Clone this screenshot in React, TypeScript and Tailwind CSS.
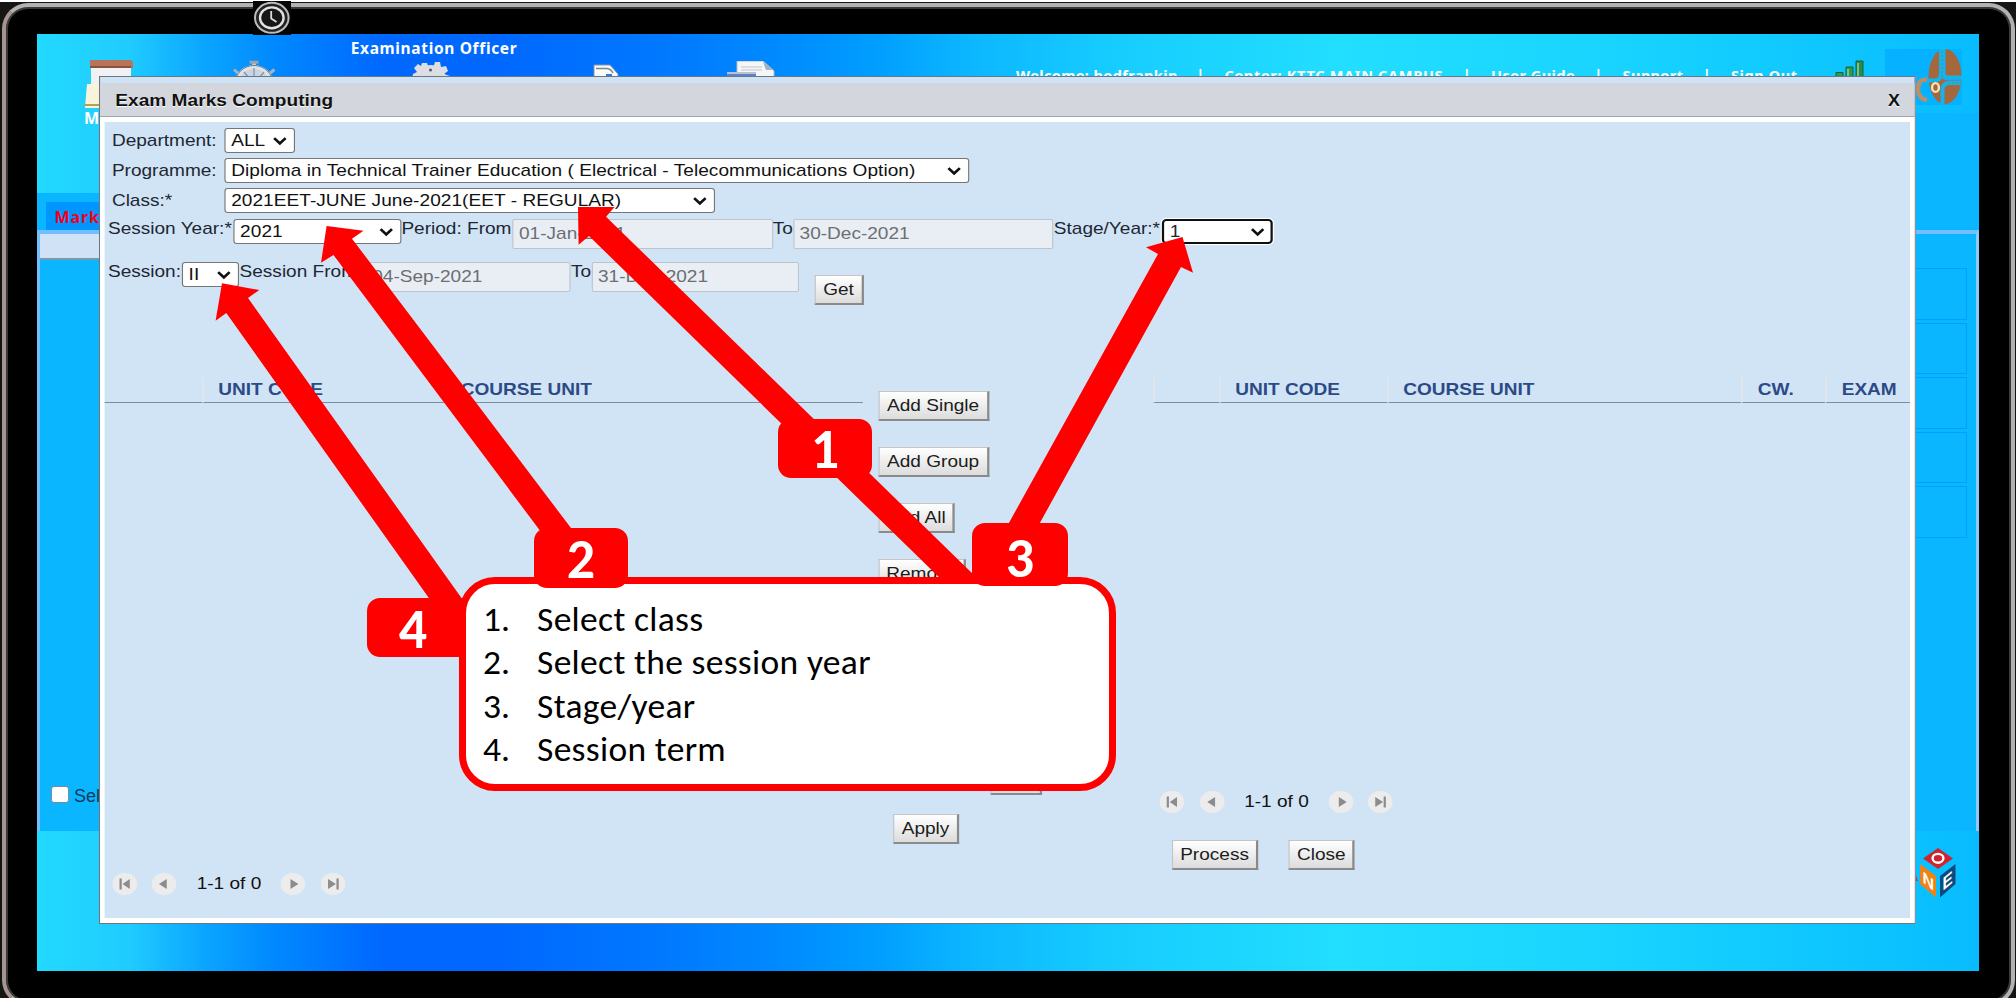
import React from "react";

function Chevron({ className = "" }: { className?: string }) {
  return (
    <svg viewBox="0 0 14 10" className={"h-[10px] w-[13px] shrink-0 " + className} fill="none" stroke="#111" strokeWidth="2.6">
      <path d="M1.5 2 L7 7.6 L12.5 2" />
    </svg>
  );
}

function Select({ value, className }: { value: string; className: string }) {
  return (
    <div className={"flex items-center justify-between rounded-[3px] border border-[#767676] bg-white pl-[5px] pr-[6px] text-[#111] " + className}>
      <span className="whitespace-nowrap leading-5 tracking-[0.05px]">{value}</span>
      <Chevron />
    </div>
  );
}

function DateBox({ value, className }: { value: string; className: string }) {
  return (
    <div className={"flex h-[30px] items-center rounded-[2px] border border-[#bcc4cc] bg-[#e9eef5] pl-[5px] text-[#6d6f73] " + className}>
      {value}
    </div>
  );
}

function PushButton({ label, className }: { label: string; className: string }) {
  return (
    <button
      className={
        "flex h-[29.5px] shrink-0 items-center justify-center whitespace-nowrap border border-b-2 border-r-2 border-[#c4c4c4] border-b-[#8a8a8a] border-r-[#8a8a8a] bg-linear-to-b from-white to-[#dcdcdc] pt-px text-[#1c1c1c] " +
        className
      }
    >
      {label}
    </button>
  );
}

function PagerIcon({ d, className = "" }: { d: string; className?: string }) {
  return (
    <svg viewBox="0 0 22 22" className={"size-[22px] shrink-0 " + className}>
      <circle cx="11" cy="11" r="11" fill="#ececec" />
      <path d={d} fill="#8c8c8c" />
    </svg>
  );
}

function Pager({ className }: { className: string }) {
  return (
    <div className={"flex h-[22px] items-center text-[#111] " + className}>
      <PagerIcon d="M6.3 5.5h2v11h-2z M15.5 6v10L9 11z" />
      <PagerIcon className="ml-[13.6px]" d="M13.5 6v10L6.5 11z" />
      <span className="ml-[17.8px] w-[57.2px] whitespace-nowrap">1-1 of 0</span>
      <PagerIcon className="ml-[18px]" d="M9 6v10L16 11z" />
      <PagerIcon className="ml-[13.6px]" d="M14 5.5h2v11h-2z M6.5 6v10L13.5 11z" />
    </div>
  );
}

function HeadCell({ label = "", className, first = false }: { label?: string; className: string; first?: boolean }) {
  return (
    <div
      className={
        "h-[26px] shrink-0 border-b-[1.5px] border-b-[#7d8c9e] pl-[13px] pt-[3px] font-bold leading-5 text-[#2c4a86] " +
        (first ? "" : "border-l-2 border-l-[#dfe5ea] ") +
        className
      }
    >
      {label}
    </div>
  );
}

function Modal() {
  return (
    <div className="absolute left-[99px] top-[76px] flex h-[848px] w-[1622px] origin-left scale-x-[1.12] flex-col border border-[#6d7780] bg-[#cfe3f6] font-['Liberation_Sans',Arial,sans-serif] text-[17px]">
      <div className="mt-[6px] flex h-[34px] shrink-0 items-center justify-between bg-[#d3d6dd] pl-[13.5px] pr-[13px] pt-[2px] font-bold text-[#111] [text-shadow:0_1px_1px_#fff]">
        <span className="tracking-[0.05px]">Exam Marks Computing</span>
        <span className="text-[16px]">X</span>
      </div>
      <div className="flex grow flex-col border-x-[4.5px] border-b-[5px] border-t-[5px] border-white bg-[#d1e4f5] text-[#1d2733] shadow-[0_-1px_0_#a2a2aa]">
        <div className="flex flex-col gap-[5px] pl-[6.5px] pt-[6px]">
          <div className="flex h-[25px] items-center">
            <span className="w-[100.5px]">Department:</span>
            <Select value="ALL" className="h-[25px] w-[63px]" />
          </div>
          <div className="flex h-[25px] items-center">
            <span className="w-[100.5px]">Programme:</span>
            <Select value="Diploma in Technical Trainer Education ( Electrical - Telecommunications Option)" className="h-[25px] w-[665px]" />
          </div>
          <div className="flex h-[25px] items-center">
            <span className="w-[100.5px]">Class:*</span>
            <Select value="2021EET-JUNE June-2021(EET - REGULAR)" className="h-[25px] w-[438px]" />
          </div>
        </div>
        <div className="mt-[6px] flex h-[30px] items-start pl-[3px] leading-5">
          <span className="w-[112px] whitespace-nowrap">Session Year:*</span>
          <Select value="2021" className="h-[25px] w-[149.5px]" />
          <span className="w-[99.5px] whitespace-nowrap pl-[0.5px]">Period: From</span>
          <DateBox value="01-Jan-2021" className="w-[232.5px]" />
          <span className="w-[18px]">To</span>
          <DateBox value="30-Dec-2021" className="w-[232px]" />
          <span className="w-[97.5px] whitespace-nowrap pl-[1px]">Stage/Year:*</span>
          <div className="flex h-[25px] w-[99px] items-center justify-between rounded-[4px] border-2 border-[#101010] bg-white pl-[5px] pr-[5px] shadow-[0_0_0_1px_#fff]">
            <span>1</span>
            <Chevron />
          </div>
        </div>
        <div className="mt-[13px] flex h-[43px] items-start pl-[3px] leading-5">
          <span className="w-[66px] whitespace-nowrap">Session:</span>
          <Select value="II" className="h-[25px] w-[51px]" />
          <span className="w-[113px] whitespace-nowrap pl-[0.5px]">Session From</span>
          <DateBox value="04-Sep-2021" className="w-[182.5px]" />
          <span className="w-[19px] pl-[1px]">To</span>
          <DateBox value="31-Dec-2021" className="w-[185.5px]" />
          <PushButton label="Get" className="ml-[14px] mt-[13px] w-[43.5px]" />
        </div>
        <div className="mt-[72px] flex items-start">
          <div className="flex w-[677px] flex-col">
            <div className="flex">
              <HeadCell first className="w-[86.5px]" />
              <HeadCell label="UNIT CODE" className="w-[216.5px]" />
              <HeadCell label="COURSE UNIT" className="grow" />
            </div>
            <Pager className="mt-[470px] pl-[6.8px]" />
          </div>
          <div className="ml-[14px] flex w-[244.5px] flex-col items-start pt-[14px]">
            <PushButton label="Add Single" className="w-[98.5px]" />
            <PushButton label="Add Group" className="mt-[26.5px] w-[98.5px]" />
            <PushButton label="Add All" className="mt-[26.5px] w-[68px]" />
            <PushButton label="Remove" className="mt-[26.5px] w-[78px]" />
            <PushButton label="" className="ml-[100px] mt-[177px] w-[45.5px]" />
            <PushButton label="Apply" className="ml-[13px] mt-[19px] w-[59px]" />
          </div>
          <div className="flex w-[676px] flex-col">
            <div className="flex">
              <HeadCell className="w-[59px]" />
              <HeadCell label="UNIT CODE" className="w-[150px]" />
              <HeadCell label="COURSE UNIT" className="w-[316.5px]" />
              <HeadCell label="CW." className="w-[75px]" />
              <HeadCell label="EXAM" className="grow" />
            </div>
            <Pager className="mt-[387.5px] pl-[6.6px]" />
            <div className="mt-[27.5px] flex gap-[27px] pl-[17.3px]">
              <PushButton label="Process" className="w-[77.5px]" />
              <PushButton label="Close" className="w-[59px]" />
            </div>
          </div>
        </div>
      </div>
    </div>
  );
}

function FileIcon() {
  return (
    <svg viewBox="0 0 49 50" className="h-[50px] w-[49px]">
      <path d="M7 2H47V48H7z" fill="#f1f1f4" />
      <path d="M6 0H46Q49 0 49 4V8H6z" fill="#b77458" />
      <path d="M6 6H47V8H6z" fill="#8b513b" />
      <path d="M3 24H22V48H1z" fill="#faf3dc" />
      <path d="M0 44H22V46H0z" fill="#b9a04e" />
    </svg>
  );
}

function WheelIcon() {
  return (
    <svg viewBox="0 0 43 40" className="h-[40px] w-[43px]" fill="none">
      <path d="M21 6V1.5" stroke="#c4ccd4" strokeWidth="4" />
      <path d="M16.5 2.2H25.5" stroke="#9aa3ad" strokeWidth="3" />
      <path d="M6 14L1 9.5 M36 14L41.5 9.5" stroke="#a9b2bc" strokeWidth="3" />
      <ellipse cx="21" cy="24" rx="17.5" ry="17" fill="#c9d5e0" stroke="#dfe3e8" strokeWidth="4" />
      <ellipse cx="21" cy="24" rx="19" ry="18.5" stroke="#6e7a88" strokeWidth="1" />
      <path d="M21 8V24 M11 12L21 24L31 12" stroke="#7f93a8" strokeWidth="1.2" />
    </svg>
  );
}

function GearIcon() {
  return (
    <svg viewBox="0 0 42 40" className="-ml-[5px] h-[40px] w-[42px]">
      <ellipse cx="20" cy="19" rx="15" ry="15" fill="#d9dbdf" />
      <path d="M11 2h5l1.500 4h5l1.500-5h5l1 5 5 -1 2 5-4 3 6 2v4H1l1-6 4-2-3-4 4-4 3 2z" fill="#dcdee2" />
      <circle cx="19.500" cy="9" r="1.500" fill="#555b66" />
    </svg>
  );
}

function PageIcon() {
  return (
    <svg viewBox="0 0 26 30" className="mt-[4px] h-[30px] w-[26px]">
      <path d="M1 1H17L25 10V30H1z" fill="#fafafa" stroke="#8793a5" />
      <path d="M3 4.500H14Q18 5 20 9" fill="none" stroke="#6c8f84" strokeWidth="1.500" />
      <path d="M13 10H19V20H13z" fill="#3a78d4" />
    </svg>
  );
}

function PrintIcon() {
  return (
    <svg viewBox="0 0 50 40" className="h-[40px] w-[50px]">
      <path d="M11 0H37L48 10V16H11z" fill="#f6f6f6" stroke="#b4bac2" />
      <path d="M15 6H36 M15 9H36" stroke="#d3d5d9" strokeWidth="1.5" />
      <path d="M37 1L40 9H48z" fill="#9fb4bf" />
      <path d="M1 11H30V40H1z" fill="#5d83c4" />
      <path d="M1 11H30V13H1z" fill="#b5c2d6" />
    </svg>
  );
}

function BarsIcon() {
  return (
    <svg viewBox="0 0 30 30" className="h-[30px] w-[30px]" stroke="#14633a" strokeWidth="1">
      <path d="M1 12.500H8V30H1z" fill="#2f9a55" />
      <path d="M11 7H18V30H11z" fill="#2f9a55" />
      <path d="M21 1H28V30H21z" fill="#2a8c4c" />
      <path d="M23 3V28 M13 9V28" stroke="#93d69a" strokeWidth="1.5" />
    </svg>
  );
}

function CrestLogo() {
  return (
    <svg viewBox="0 0 77 56" className="h-[56px] w-[77px]">
      <path d="M0 0H77V56H0z" fill="#06b2ff" />
      <ellipse cx="60" cy="27.5" rx="16.5" ry="27.5" fill="#a5673c" />
      <path d="M42 31.5H50Q56 31 56 25V0" fill="none" stroke="#12b4ee" strokeWidth="4" />
      <path d="M57.500 56V40Q58 34 64 34H77" fill="none" stroke="#12b4ee" strokeWidth="4" />
      <path d="M58 0V24Q58 29 63 29H77" fill="none" stroke="#12b4ee" strokeWidth="5" />
      <path d="M57 2V26Q57 31 62 31H77 M63 34H77" fill="none" stroke="#5f8790" strokeWidth="1" strokeDasharray="2 2" />
      <ellipse cx="50.500" cy="38.500" rx="3.400" ry="4.400" fill="none" stroke="#f7e3b4" strokeWidth="2.400" />
      <path d="M42 31Q33 29 33 41Q34 50 42 51" fill="none" stroke="#b98e6c" strokeWidth="4.5" />
    </svg>
  );
}

function OneLogo() {
  return (
    <svg viewBox="0 0 42 52" className="h-[52px] w-[42px]">
      <path d="M0 22L4 33H0z" fill="#c8373c" />
      <path d="M24 0L39 10.5L24 21L9 10.5z" fill="#cf2430" />
      <ellipse cx="24" cy="10.3" rx="5.4" ry="4.4" fill="none" stroke="#fff" strokeWidth="2.4" />
      <path d="M6 16L22 28V49.5L6 36z" fill="#f08213" />
      <path d="M26 28L41.5 16V36L26 49.5z" fill="#0d4a7d" />
      <text transform="matrix(1 .8 0 1 8.500 34)" fontSize="16" fontWeight="700" fill="#fff" fontFamily="Liberation Sans, sans-serif">N</text>
      <text transform="matrix(.85 -.7 0 1 28.5 43)" fontSize="18" fontWeight="700" fill="#fff" fontFamily="Liberation Sans, sans-serif">E</text>
    </svg>
  );
}

function ClockIcon() {
  return (
    <svg viewBox="0 0 38 34" className="absolute left-[253px] top-[1px] h-[34px] w-[38px]" fill="none">
      <path d="M0 0H38V34H0z" fill="#050505" />
      <ellipse cx="18.8" cy="16.8" rx="16.8" ry="15" stroke="#bdbdbd" strokeWidth="2" fill="#222" />
      <ellipse cx="18.8" cy="16.8" rx="11.8" ry="10.4" stroke="#e2e2e2" strokeWidth="2.4" fill="#161616" />
      <path d="M18.2 10V17.5L23.5 21" stroke="#dcdcdc" strokeWidth="1.8" />
    </svg>
  );
}

const links = [
  { label: "Welcome: hodfrankin", width: "w-[160px] tracking-[0.4px]" },
  { label: "Center: KTTC MAIN CAMPUS", width: "w-[218px] tracking-[0.7px]" },
  { label: "User Guide", width: "w-[83px] tracking-[0.5px]" },
  { label: "Support", width: "w-[60px] tracking-[0.5px]" },
  { label: "Sign Out", width: "w-[66px] tracking-[0.6px]" },
];

function Page() {
  return (
    <div className="flex h-[937px] w-[1942px] flex-col overflow-hidden bg-[linear-gradient(90deg,#22d9ff_0px,#20ccff_90px,#0aa4ff_170px,#0088ff_240px,#0068ff_345px,#0068ff_460px,#0078ff_620px,#0088ff_730px,#009eff_840px,#0cb6ff_930px,#16ccff_1070px,#22deff_1300px,#1ad6ff_1540px,#10c8ff_1760px,#08bcff_1942px)] font-['Noto_Sans','Open_Sans',sans-serif] text-[15.5px] font-bold text-white">
      <div className="flex h-[159px] shrink-0 items-start">
        <div className="flex w-[142px] flex-col items-center pt-[26px]">
          <FileIcon />
          <span className="w-[50px] pl-[1px] text-[16px] leading-[17px] tracking-[1px]">Marks</span>
        </div>
        <div className="flex w-[151px] justify-center pt-[26px]">
          <WheelIcon />
        </div>
        <div className="flex w-[208px] flex-col items-center pt-[4px]">
          <span className="h-[23px] whitespace-nowrap leading-5 tracking-[0.65px]">Examination Officer</span>
          <GearIcon />
        </div>
        <div className="flex w-[136px] justify-center pt-[26px]">
          <PageIcon />
        </div>
        <div className="flex w-[154px] justify-center pt-[27px]">
          <PrintIcon />
        </div>
        <div className="ml-[188px] flex pt-[31px] leading-5">
          {links.map((l, i) => (
            <React.Fragment key={l.label}>
              {i > 0 && <span className="w-[48.5px] text-center">|</span>}
              <span className={"whitespace-nowrap text-[14.5px] " + l.width}>{l.label}</span>
            </React.Fragment>
          ))}
        </div>
        <div className="ml-[38px] mt-[26px]">
          <BarsIcon />
        </div>
        <div className="ml-auto mr-[17px] mt-[15px]">
          <CrestLogo />
        </div>
      </div>
      <div className="-mt-[80px] ml-auto h-[80px] w-[80px] shrink-0 bg-[#0ab6ff]" />
      <div className="flex h-[638px] shrink-0 flex-col bg-[#0ab6ff]">
        <div className="ml-[9px] mt-[9px] h-[28px] w-[120px] shrink-0 bg-[#0096ff] pl-[8.5px] text-[16px] leading-[30px] tracking-[0.9px] text-[#f5001c]">Marks</div>
        <div className="flex grow flex-col border-x-[3px] border-t-4 border-[#74bdff] border-r-[#8ccaf8]">
          <div className="flex grow justify-between">
            <div className="flex w-[200px] flex-col">
              <div className="h-[26px] border-b-2 border-[#7c97b0] bg-[#d0e3f6]" />
              <div className="mb-[21px] mt-auto flex items-center gap-[5px] pl-[11px] font-['Liberation_Sans',Arial,sans-serif] text-[18px] font-normal text-[#0a3c5c]">
                <span className="-mt-[4px] h-[17px] w-[18px] rounded-[3px] border border-[#7d8b98] bg-white" />
                Select
              </div>
            </div>
            <div className="mr-[9px] mt-[34px] flex flex-col gap-[3px]">
              {[0, 1, 2, 3, 4].map((n) => (
                <div key={n} className="h-[51.6px] w-[80px] border-[1.5px] border-[#039fff]" />
              ))}
            </div>
          </div>
        </div>
      </div>
      <div className="ml-auto mr-[23px] mt-[17px]">
        <OneLogo />
      </div>
    </div>
  );
}

const steps = ["Select class", "Select the session year", "Stage/year", "Session term"];

function Badge({ n, className }: { n: number; className: string }) {
  return (
    <div className={"absolute flex justify-center rounded-[13px] bg-[#ff0000] font-['Carlito','Open_Sans',sans-serif] text-[56px] font-bold text-white " + className}>
      {n}
    </div>
  );
}

function Annotations() {
  return (
    <>
      <svg viewBox="0 0 2016 998" className="absolute left-0 top-0 h-[998px] w-[2016px]" fill="#ff0000">
        <path d="M578 207H614.6L606 216.7L975 576L975 584H946L589 236L578.6 244.7z" />
        <path d="M326.6 226L363.5 230.7L352 238.7L574 532L544 536L333.5 255L321 262.7z" />
        <path d="M1182.5 237L1193 272.7L1181 267L1036 530H1005L1158 254L1146 247.3z" />
        <path d="M222 283.3L259.3 290L248 298L470 610L436 608L226.3 313L215.6 320.7z" />
      </svg>
      <Badge n={1} className="left-[778px] top-[419px] h-[59px] w-[94px] leading-[61px]" />
      <Badge n={4} className="left-[367px] top-[598px] h-[59px] w-[105px] pr-[13px] leading-[62px]" />
      <div className="absolute left-[459px] top-[577px] flex h-[214px] w-[657px] flex-col rounded-[36px] border-[7.5px] border-[#ff0000] bg-white pl-[17px] pt-[14px] font-['Carlito','Open_Sans',sans-serif] text-[35.5px] text-black">
        {steps.map((s, i) => (
          <div key={s} className="flex h-[43.4px] leading-[43.4px]">
            <span className="w-[54px]">{i + 1}.</span>
            <span className="whitespace-nowrap tracking-[0.32px]">{s}</span>
          </div>
        ))}
      </div>
      <Badge n={2} className="left-[534px] top-[528px] h-[60px] w-[94px] leading-[63px]" />
      <Badge n={3} className="left-[972px] top-[523px] h-[63px] w-[96px] leading-[70px]" />
    </>
  );
}

export default function App() {
  return (
    <div className="relative h-[998px] w-[2016px] overflow-hidden bg-[#151515]">
      <div className="h-[2px] bg-white" />
      <div className="ml-[2px] mt-px h-[1003px] w-[2013px] rounded-[26px] border-4 border-[#b4b1b1] border-l-[#a5958f] bg-black pl-[31px] pt-[27px] shadow-[inset_0_0_0_2px_#3a3a3a]">
        <Page />
      </div>
      <ClockIcon />
      <Modal />
      <Annotations />
    </div>
  );
}
